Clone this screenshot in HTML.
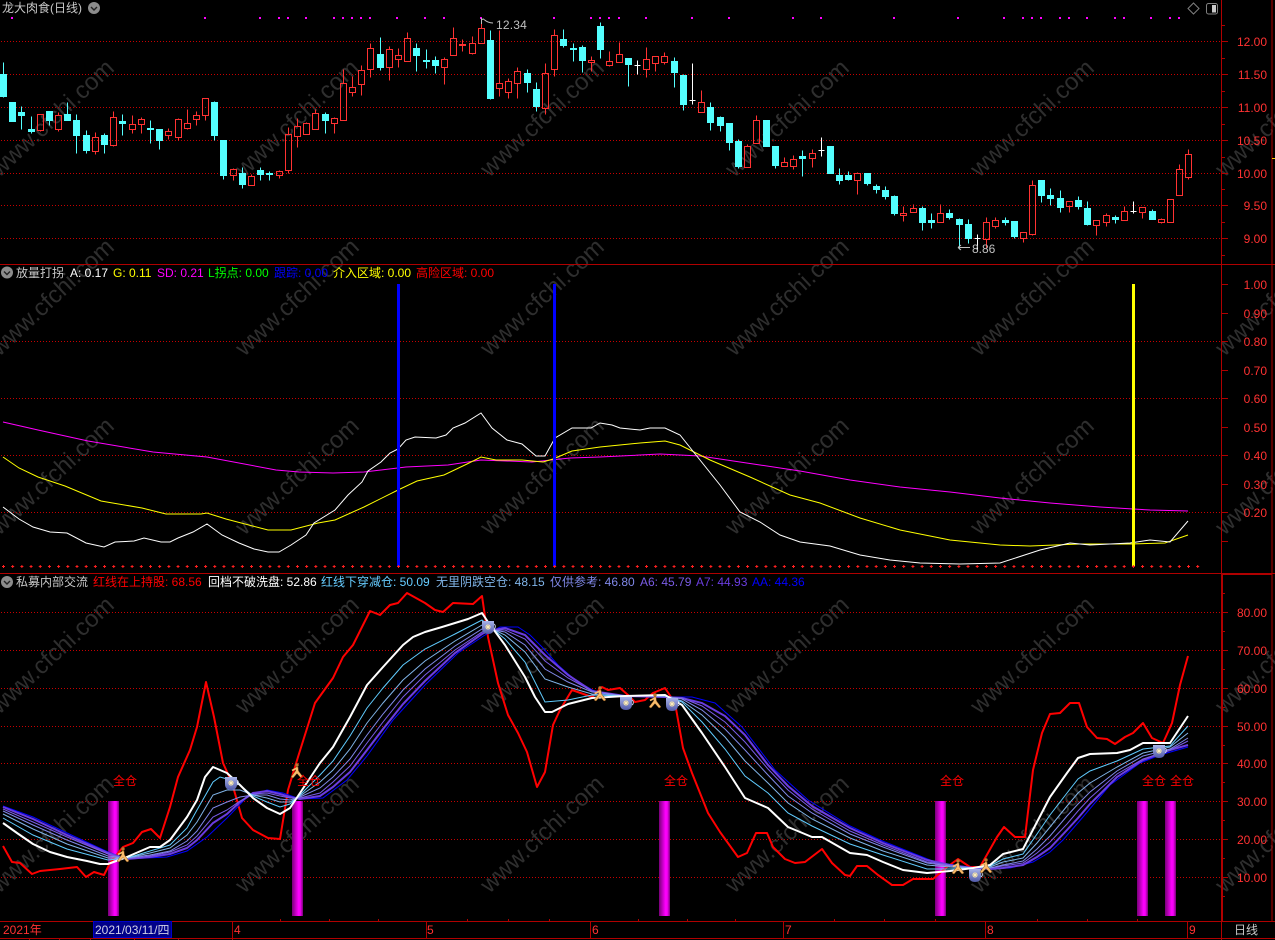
<!DOCTYPE html>
<html lang="zh-CN">
<head>
<meta charset="utf-8">
<title>龙大肉食(日线)</title>
<style>
html,body{margin:0;padding:0;background:#000;width:1275px;height:940px;overflow:hidden}
svg{display:block;position:absolute;left:0;top:0}
text{font-family:"Liberation Sans","Noto Sans CJK SC","WenQuanYi Zen Hei",sans-serif;font-size:12px;white-space:pre}
.wm text{font-size:24px;fill:#2e2e2e;text-anchor:middle}
.ax text{fill:#ff3232;text-anchor:end}
</style>
</head>
<body>
<svg width="1275" height="940" viewBox="0 0 1275 940" xmlns="http://www.w3.org/2000/svg">
<defs>
<linearGradient id="bar" x1="0" x2="1" y1="0" y2="0"><stop offset="0" stop-color="#780078"/><stop offset=".6" stop-color="#ff00ff"/><stop offset=".75" stop-color="#f400f4"/><stop offset="1" stop-color="#780078"/></linearGradient>
<linearGradient id="cupg" x1="0" x2="0" y1="0" y2="1"><stop offset="0" stop-color="#a8b4ea"/><stop offset="1" stop-color="#5058a8"/></linearGradient>
<g id="cup">
<path d="M6 -3a3 3 0 0 1 0 5" fill="none" stroke="#c8d0e8" stroke-width="1"/>
<path d="M-6 -6H6V1Q6 7 0 7Q-6 7-6 1Z" fill="url(#cupg)"/>
<path d="M0 -3V3M-3 0H3M-2-2L2 2M2-2L-2 2" stroke="#f4e4a8" stroke-width=".9"/>
<circle r="1" fill="#fff0c0"/>
</g>
<g id="run">
<circle cx="0" cy="-6" r="1.7" fill="#b87830"/>
<path d="M-1 -4L1 -4L1.5 0L6 6L4 7L0 2.5L-4 7L-6 6L-1.5 0Z" fill="#f8bc6c" stroke="#8a5014" stroke-width=".5"/>
<path d="M0 -3L-5 -.5" stroke="#f8bc6c" stroke-width="1.8"/>
</g>
</defs>

<!-- watermark -->
<g class="wm">
<text x="52" y="126" transform="rotate(-43 52 118)">www.cfchi.com</text><text x="297" y="126" transform="rotate(-43 297 118)">www.cfchi.com</text><text x="542" y="126" transform="rotate(-43 542 118)">www.cfchi.com</text><text x="787" y="126" transform="rotate(-43 787 118)">www.cfchi.com</text><text x="1032" y="126" transform="rotate(-43 1032 118)">www.cfchi.com</text><text x="1277" y="126" transform="rotate(-43 1277 118)">www.cfchi.com</text>
<text x="52" y="305" transform="rotate(-43 52 297)">www.cfchi.com</text><text x="297" y="305" transform="rotate(-43 297 297)">www.cfchi.com</text><text x="542" y="305" transform="rotate(-43 542 297)">www.cfchi.com</text><text x="787" y="305" transform="rotate(-43 787 297)">www.cfchi.com</text><text x="1032" y="305" transform="rotate(-43 1032 297)">www.cfchi.com</text><text x="1277" y="305" transform="rotate(-43 1277 297)">www.cfchi.com</text>
<text x="52" y="484" transform="rotate(-43 52 476)">www.cfchi.com</text><text x="297" y="484" transform="rotate(-43 297 476)">www.cfchi.com</text><text x="542" y="484" transform="rotate(-43 542 476)">www.cfchi.com</text><text x="787" y="484" transform="rotate(-43 787 476)">www.cfchi.com</text><text x="1032" y="484" transform="rotate(-43 1032 476)">www.cfchi.com</text><text x="1277" y="484" transform="rotate(-43 1277 476)">www.cfchi.com</text>
<text x="52" y="663" transform="rotate(-43 52 655)">www.cfchi.com</text><text x="297" y="663" transform="rotate(-43 297 655)">www.cfchi.com</text><text x="542" y="663" transform="rotate(-43 542 655)">www.cfchi.com</text><text x="787" y="663" transform="rotate(-43 787 655)">www.cfchi.com</text><text x="1032" y="663" transform="rotate(-43 1032 655)">www.cfchi.com</text><text x="1277" y="663" transform="rotate(-43 1277 655)">www.cfchi.com</text>
<text x="52" y="842" transform="rotate(-43 52 834)">www.cfchi.com</text><text x="297" y="842" transform="rotate(-43 297 834)">www.cfchi.com</text><text x="542" y="842" transform="rotate(-43 542 834)">www.cfchi.com</text><text x="787" y="842" transform="rotate(-43 787 834)">www.cfchi.com</text><text x="1032" y="842" transform="rotate(-43 1032 834)">www.cfchi.com</text><text x="1277" y="842" transform="rotate(-43 1277 834)">www.cfchi.com</text>
</g>

<!-- dotted grids -->
<path fill="none" stroke="#c80000" stroke-width="1" stroke-dasharray="1 2" d="M1 41.5H1222M1 74.5H1222M1 107.5H1222M1 140.5H1222M1 173.5H1222M1 205.5H1222M1 238.5H1222M1 341.5H1222M1 398.5H1222M1 455.5H1222M1 512.5H1222M1 612.5H1222M1 650.5H1222M1 688.5H1222M1 726.5H1222M1 763.5H1222M1 801.5H1222M1 839.5H1222M1 877.5H1222"/>

<!-- frames -->
<path fill="none" stroke="#b00000" stroke-width="1" d="M0 264.5H1275M0 573.5H1275M1222 574.5H1272M1221.5 0V940M1222.5 574V921M1272 0V921M0 921.5H1275M0 938.5H1275"/>
<!-- axis ticks -->
<path fill="none" stroke="#b00000" stroke-width="1" d="M1222 41.5h6M1222 74.5h6M1222 107.5h6M1222 140.5h6M1222 173.5h6M1222 205.5h6M1222 238.5h6M1222 25.5h3M1222 58.5h3M1222 91.5h3M1222 124.5h3M1222 157.5h3M1222 189.5h3M1222 222.5h3M1222 255.5h3M1222 284.5h6M1222 313.5h6M1222 341.5h6M1222 370.5h6M1222 398.5h6M1222 427.5h6M1222 455.5h6M1222 484.5h6M1222 512.5h6M1222 541.5h6M1222 612.5h6M1222 650.5h6M1222 688.5h6M1222 726.5h6M1222 763.5h6M1222 801.5h6M1222 839.5h6M1222 877.5h6M1222 593.5h3M1222 631.5h3M1222 669.5h3M1222 707.5h3M1222 745.5h3M1222 782.5h3M1222 820.5h3M1222 858.5h3M1222 896.5h3"/>
<path stroke="#ffd000" stroke-width="1" d="M1272 158.5h3"/>

<!-- magenta top dots -->
<path stroke="#ff00ff" stroke-width="2" fill="none" d="M11 18h2M204 18h2M259 18h2M278 18h2M287 18h2M305 18h2M333 18h2M342 18h2M351 18h2M360 18h2M369 18h2M396 18h2M424 18h2M443 18h2M480 18h2M553 18h2M590 18h2M599 18h2M608 18h2M618 18h2M645 18h2M691 18h2M728 18h2M792 18h2M820 18h2M893 18h2M957 18h2M1003 18h2M1022 18h2M1031 18h2M1040 18h2M1059 18h2M1068 18h2M1086 18h2M1114 18h2M1123 18h2M1150 18h2M1169 18h2M1178 18h2"/>

<!-- candles -->
<g transform="translate(.5,.5)">
<path fill="#54ffff" stroke="#54ffff" stroke-width="1" d="M3 62V97M0 74h6v22h-6zM12 102V121M9 102h6v19h-6zM21 106V129M18 112h6v3h-6zM31 116V133M28 129h6v2h-6zM49 111V125M46 111h6v9h-6zM67 102V120M64 114h6v6h-6zM76 114V153M73 120h6v15h-6zM86 130V153M83 135h6v15h-6zM104 133V153M101 135h6v9h-6zM122 114V135M119 121h6v2h-6zM150 120V143M147 128h6v1h-6zM159 129V149M156 129h6v11h-6zM214 101V140M211 102h6v33h-6zM223 140V179M220 140h6v35h-6zM242 167V188M239 173h6v11h-6zM260 167V180M257 170h6v4h-6zM269 171V180M266 173h6v1h-6zM325 112V133M322 114h6v6h-6zM380 37V70M377 54h6v13h-6zM416 43V71M413 48h6v7h-6zM426 49V68M423 60h6v1h-6zM435 56V73M432 60h6v5h-6zM490 30V99M487 40h6v58h-6zM527 69V92M524 73h6v9h-6zM536 82V111M533 89h6v17h-6zM563 29V47M560 39h6v6h-6zM573 43V61M570 48h6v1h-6zM582 45V72M579 47h6v13h-6zM600 22V58M597 26h6v23h-6zM628 58V86M625 58h6v6h-6zM674 57V87M671 61h6v11h-6zM683 74V110M680 75h6v29h-6zM710 102V130M707 107h6v15h-6zM720 116V131M717 117h6v8h-6zM729 123V150M726 123h6v19h-6zM738 139V168M735 141h6v25h-6zM766 120V146M763 120h6v26h-6zM775 146V168M772 146h6v19h-6zM802 150V176M799 156h6v2h-6zM830 146V173M827 146h6v27h-6zM839 168V184M836 175h6v5h-6zM848 171V180M845 175h6v4h-6zM867 173V185M864 173h6v10h-6zM876 184V193M873 186h6v3h-6zM885 186V199M882 190h6v6h-6zM894 195V215M891 196h6v17h-6zM922 206V230M919 208h6v14h-6zM931 213V228M928 220h6v2h-6zM949 209V219M946 213h6v4h-6zM959 218V249M956 219h6v5h-6zM968 219V243M965 224h6v14h-6zM1005 217V225M1002 220h6v2h-6zM1014 221V238M1011 221h6v15h-6zM1041 180V202M1038 180h6v15h-6zM1050 188V205M1047 195h6v3h-6zM1060 190V212M1057 198h6v9h-6zM1078 196V209M1075 200h6v6h-6zM1087 201V225M1084 208h6v16h-6zM1115 215V223M1112 217h6v2h-6zM1152 209V219M1149 211h6v8h-6z"/>
<path fill="none" stroke="#ff3232" stroke-width="1" d="M40 114m-3 0h6v16h-6zm3 16V131M58 112V115m-3 0h6v14h-6zm3 14V131M95 132V137m-3 0h6v14h-6zm3 14V154M113 111V117m-3 0h6v28h-6zm3 28V146M132 115V124m-3 0h6v5h-6zm3 5V133M141 117V119m-3 0h6v5h-6zm3 5V133M168 128V131m-3 0h6v4h-6zm3 4V139M178 118V119m-3 0h6v18h-6zm3 18V140M187 109V123m-3 0h6v5h-6zm3 5V129M196 111V115m-3 0h6v4h-6zm3 4V125M205 98m-3 0h6v17h-6zm3 17V120M233 168V169m-3 0h6v6h-6zm3 6V180M251 174V176m-3 0h6v9h-6zM279 170V171m-3 0h6v4h-6zm3 4V178M288 127V134m-3 0h6v36h-6zm3 36V173M297 118V126m-3 0h6v10h-6zm3 10V147M306 122V123m-3 0h6v11h-6zM315 109V113m-3 0h6v16h-6zM334 117V118m-3 0h6v5h-6zm3 5V133M343 69V83m-3 0h6v37h-6zM352 76V87m-3 0h6v5h-6zm3 5V96M361 65V70m-3 0h6v14h-6zm3 14V95M370 43V48m-3 0h6v21h-6zm3 21V77M389 46V49m-3 0h6v18h-6zm3 18V80M398 48V55m-3 0h6v4h-6zm3 4V67M407 32V38m-3 0h6v23h-6zM444 57V59m-3 0h6v8h-6zm3 8V84M453 27V38m-3 0h6v17h-6zM462 39V44m-3 0h6v1h-6zm3 1V51M472 36V43m-3 0h6v10h-6zm3 10V54M481 18V28m-3 0h6v15h-6zM499 30V83m-3 0h6v5h-6zm3 5V96M508 78V81m-3 0h6v11h-6zm3 11V98M517 67V71m-3 0h6v12h-6zm3 12V98M545 63V73m-3 0h6v35h-6zm3 35V114M554 29V35m-3 0h6v34h-6zm3 34V76M591 56V60m-3 0h6v2h-6zm3 2V71M609 51V61m-3 0h6v4h-6zm3 4V66M619 42V54m-3 0h6v8h-6zM646 47V59m-3 0h6v10h-6zm3 10V77M655 56m-3 0h6v7h-6zm3 7V71M664 52V56m-3 0h6v6h-6zm3 6V64M701 90V102m-3 0h6v10h-6zM747 144V146m-3 0h6v21h-6zM756 115V120m-3 0h6v23h-6zM784 157V162m-3 0h6v4h-6zM793 155V159m-3 0h6v7h-6zm3 7V169M812 149V153m-3 0h6v5h-6zm3 5V167M857 172V173m-3 0h6v7h-6zm3 7V194M903 206V213m-3 0h6v2h-6zm3 2V221M913 204V208m-3 0h6v4h-6zM940 204V213m-3 0h6v9h-6zM986 217V222m-3 0h6v17h-6zm3 17V248M995 217V220m-3 0h6v6h-6zm3 6V228M1023 232m-3 0h6v6h-6zm3 6V242M1032 180V185m-3 0h6v49h-6zm3 49V235M1069 201m-3 0h6v5h-6zm3 5V212M1096 220m-3 0h6v5h-6zm3 5V235M1106 213V215m-3 0h6v7h-6zm3 7V226M1124 206V211m-3 0h6v9h-6zM1142 207m-3 0h6v5h-6zm3 5V218M1161 218V219m-3 0h6v3h-6zm3 3V223M1170 199m-3 0h6v23h-6zM1179 164V169m-3 0h6v26h-6zM1188 149V154m-3 0h6v23h-6zm3 23V179"/>
<path fill="none" stroke="#ffffff" stroke-width="1" d="M637 60V74M634 65h6M692 63V104M689 100h6M821 137V156M818 150h6M977 234V249M974 238h6M1133 201V213M1130 211h6"/>
</g>

<!-- hi / lo markers -->
<path fill="none" stroke="#c0c0c0" stroke-width="1" d="M481.5 18V24M481.5 19.5L484 19M484 19.5Q488 23 493 23"/>
<text x="496" y="29" fill="#c0c0c0" letter-spacing=".2">12.34</text>
<path fill="none" stroke="#c0c0c0" stroke-width="1" d="M958 247.5H970M958 247.5L961 245M958 247.5L961 250"/>
<text x="972" y="253" fill="#c0c0c0">8.86</text>

<!-- Panel 2 lines -->
<polyline fill="none" stroke="#ff00ff" stroke-width="1" points="3,422 38,430 88,441 153,452 207,457 276,470 299,472 333,473 364,472 406,467 448,465 481,460 532,462 570,458 600,457 660,454 700,456 760,465 800,471 850,480 900,487 950,492 1000,498 1050,503 1100,507 1150,510 1188,511"/>
<polyline fill="none" stroke="#ffff00" stroke-width="1" points="3,457 19,468 38,477 65,486 101,501 142,508 166,514 201,514 207,513 226,519 268,530 291,530 318,523 335,520 364,507 398,490 417,481 444,475 467,464 481,457 496,460 522,460 543,462 553,459 572,451 600,447 640,443 665,441 680,445 710,460 750,477 790,495 820,503 860,518 900,530 950,540 1000,545 1030,546 1080,544 1130,544 1165,543 1188,535"/>
<polyline fill="none" stroke="#ffffff" stroke-width="1" points="3,507 19,519 33,527 50,532 67,533 86,543 104,547 115,542 134,541 144,538 161,542 170,542 178,538 193,532 207,524 222,535 239,543 254,549 268,552 279,552 291,545 306,535 314,523 335,510 348,495 362,482 368,471 381,462 390,453 398,449 406,440 415,437 436,438 446,435 453,428 465,423 481,413 492,428 507,440 522,444 536,456 545,456 555,438 572,428 591,428 600,423 612,425 620,428 640,430 650,428 665,428 680,435 700,460 720,485 740,512 760,522 780,535 800,542 830,546 860,555 890,560 920,563 960,564 1000,563 1040,550 1070,543 1090,545 1110,544 1130,543 1150,540 1170,542 1188,521"/>
<rect x="397" y="284" width="3" height="282" fill="#0000ff"/>
<rect x="553" y="284" width="3" height="282" fill="#0000ff"/>
<rect x="1132" y="284" width="3" height="282" fill="#ffff00"/>
<path fill="none" stroke="#ff2020" stroke-width="1" stroke-dasharray="3 6.186" d="M2 566.5H1200"/>
<path fill="none" stroke="#ff2020" stroke-width="3" stroke-dasharray="1 8.186" d="M3 566.5H1200"/>

<!-- Panel 3 bars -->
<rect x="108" y="801" width="11" height="115" fill="url(#bar)"/>
<rect x="292" y="801" width="11" height="115" fill="url(#bar)"/>
<rect x="659" y="801" width="11" height="115" fill="url(#bar)"/>
<rect x="935" y="801" width="11" height="115" fill="url(#bar)"/>
<rect x="1137" y="801" width="11" height="115" fill="url(#bar)"/>
<rect x="1165" y="801" width="11" height="115" fill="url(#bar)"/>

<!-- Panel 3 lines -->
<polyline fill="none" stroke="#ff0000" stroke-width="2" stroke-linejoin="round" points="3,846 12,862 20,863 32,874 40,871 60,869 77,867 86,877 94,872 104,875 110,863 123,847 133,843 142,832 151,829 160,838 170,807 178,777 190,750 197,727 206,682 214,717 223,763 232,783 242,818 253,830 268,838 280,839 288,790 298,757 315,703 333,678 343,657 353,645 370,611 380,615 390,605 398,603 407,593 425,603 435,610 443,612 453,603 473,604 482,596 488,637 498,683 508,715 518,733 527,752 537,787 545,772 553,725 560,710 572,690 592,697 602,687 608,690 620,688 628,695 635,702 645,700 653,693 665,688 675,703 683,748 692,773 708,813 720,832 738,857 747,853 756,833 767,833 773,847 785,859 795,863 805,862 822,849 832,863 845,875 850,876 857,866 867,866 878,875 892,885 903,885 913,879 933,879 947,867 958,859 970,867 980,867 997,837 1004,827 1015,837 1025,837 1033,770 1042,733 1050,714 1060,713 1070,703 1079,703 1087,727 1097,738 1107,739 1115,744 1125,737 1133,733 1143,723 1152,738 1163,743 1172,723 1180,685 1188,656"/>
<polyline fill="none" stroke="#0000ff" stroke-width="1" points="3,806 33,817 67,833 108,852 127,859 167,857 187,851 207,837 227,818 247,797 267,790 283,793 300,799 323,798 347,780 367,756 393,720 425,685 458,653 485,635 500,627 518,627 530,635 542,647 558,665 575,680 598,693 625,696 660,697 692,697 715,703 742,727 775,770 808,800 850,826 880,840 910,852 935,862 960,866 985,869 1010,868 1033,862 1050,852 1063,840 1083,817 1110,785 1140,763 1160,755 1188,747"/>
<polyline fill="none" stroke="#6a3ce0" stroke-width="2" points="3,807 33,819 67,835 108,853 127,859 150,857 170,854 187,848 197,840 213,823 227,814 240,802 253,793 267,791 280,794 290,797 300,799 320,796 333,787 350,772 367,750 383,729 403,704 425,681 455,653 482,634 488,631 505,628 525,635 545,655 568,675 592,691 625,696 665,697 682,698 702,703 725,716 745,735 768,765 788,786 812,806 850,828 883,843 927,860 950,865 973,868 990,869 1003,868 1023,865 1037,857 1050,848 1067,830 1078,818 1090,804 1117,777 1143,760 1170,750 1188,745"/>
<polyline fill="none" stroke="#7a5ce6" stroke-width="1" points="3,809 33,822 67,837 108,854 127,859 150,856 170,852 187,845 197,836 213,817 227,810 240,801 253,794 267,793 280,796 290,798 300,798 320,793 333,782 350,766 367,743 383,722 403,697 425,675 455,650 482,632 488,630 505,630 525,639 545,661 568,678 592,691 625,696 665,697 682,698 702,706 725,722 745,742 768,769 788,790 812,809 850,831 883,845 927,862 950,865 973,868 990,868 1003,866 1023,863 1037,853 1050,842 1067,824 1078,811 1090,798 1117,774 1143,759 1170,750 1188,741"/>
<polyline fill="none" stroke="#8088e8" stroke-width="1" points="3,811 33,825 67,840 108,856 127,858 150,855 170,851 187,841 197,831 213,808 227,802 240,797 253,795 267,795 280,799 290,800 300,797 320,788 333,777 350,759 367,735 383,714 403,690 425,669 455,646 482,629 488,629 505,632 525,645 545,669 568,682 592,692 625,696 665,696 682,699 702,710 725,729 745,750 768,775 788,796 812,813 850,834 883,847 927,863 950,866 973,868 990,868 1003,865 1023,861 1037,849 1050,836 1067,816 1078,804 1090,792 1117,771 1143,756 1170,749 1188,738"/>
<polyline fill="none" stroke="#80b4e8" stroke-width="1" points="3,814 33,829 67,844 108,858 127,858 150,853 170,848 187,835 197,822 213,795 227,790 240,790 253,795 267,798 280,802 290,802 300,796 320,782 333,770 350,749 367,723 383,703 403,680 425,661 455,641 482,625 488,627 505,635 525,652 545,679 568,687 592,694 625,696 665,696 682,701 702,715 725,737 745,761 768,783 788,803 812,819 850,838 883,851 927,865 950,867 973,868 990,867 1003,862 1023,858 1037,843 1050,827 1067,806 1078,793 1090,783 1117,767 1143,753 1170,747 1188,733"/>
<polyline fill="none" stroke="#60ccff" stroke-width="1" points="3,818 33,835 67,849 108,860 127,858 150,851 170,845 187,828 197,810 213,782 220,777 227,779 240,785 253,796 267,802 280,807 290,804 300,795 320,775 333,761 350,736 367,708 383,688 403,665 425,649 455,634 482,620 488,625 505,639 525,662 545,702 568,700 592,695 625,696 665,696 682,702 702,722 725,749 745,776 768,793 788,813 812,826 850,844 883,855 927,869 950,869 973,868 990,866 1003,859 1023,854 1037,834 1050,815 1067,793 1078,779 1090,771 1117,761 1143,749 1170,746 1188,726"/>
<polyline fill="none" stroke="#ffffff" stroke-width="2" stroke-linejoin="round" points="3,823 17,833 33,844 50,852 67,857 87,861 100,864 108,864 127,857 150,847 160,847 170,840 187,817 197,800 205,777 213,767 227,773 240,785 253,798 267,808 280,814 290,808 300,793 320,763 333,747 350,717 367,685 383,667 403,645 413,637 425,632 442,627 455,623 468,619 482,613 488,622 505,645 525,677 535,697 545,712 552,712 568,704 592,698 625,696 665,695 682,705 702,733 725,767 745,798 768,808 788,827 812,837 822,837 850,853 867,855 883,862 903,870 927,873 950,871 973,868 990,865 1003,854 1023,849 1037,822 1050,797 1067,773 1078,758 1090,754 1117,753 1130,750 1143,743 1170,743 1188,716"/>

<!-- icons -->
<use href="#cup" x="231" y="783"/><use href="#cup" x="488" y="627"/><use href="#cup" x="626" y="703"/><use href="#cup" x="672" y="704"/><use href="#cup" x="975" y="875"/><use href="#cup" x="1159" y="751"/>
<use href="#run" x="123" y="855"/><use href="#run" x="297" y="771"/><use href="#run" x="600" y="694"/><use href="#run" x="655" y="701"/><use href="#run" x="958" y="867"/><use href="#run" x="986" y="866"/>

<!-- full position labels -->
<g fill="#ff0000">
<text x="113" y="785">全仓</text><text x="297" y="785">全仓</text><text x="664" y="785">全仓</text><text x="940" y="785">全仓</text><text x="1142" y="785">全仓</text><text x="1170" y="785">全仓</text>
</g>

<!-- axis labels -->
<g class="ax">
<text x="1267" y="46">12.00</text><text x="1267" y="79">11.50</text><text x="1267" y="112">11.00</text><text x="1267" y="145">10.50</text><text x="1267" y="178">10.00</text><text x="1267" y="210">9.50</text><text x="1267" y="243">9.00</text>
<text x="1267" y="289">1.00</text><text x="1267" y="318">0.90</text><text x="1267" y="346">0.80</text><text x="1267" y="375">0.70</text><text x="1267" y="403">0.60</text><text x="1267" y="432">0.50</text><text x="1267" y="460">0.40</text><text x="1267" y="489">0.30</text><text x="1267" y="517">0.20</text>
<text x="1267" y="617">80.00</text><text x="1267" y="655">70.00</text><text x="1267" y="693">60.00</text><text x="1267" y="731">50.00</text><text x="1267" y="768">40.00</text><text x="1267" y="806">30.00</text><text x="1267" y="844">20.00</text><text x="1267" y="882">10.00</text>
</g>

<!-- header 1 -->
<text x="2" y="12" fill="#c8c8c8">龙大肉食(日线)</text>
<circle cx="94" cy="8" r="6" fill="#8c8c8c"/><path d="M91 7L94 10L97 7" fill="none" stroke="#222" stroke-width="1.4"/>
<path d="M1193.5 3L1199 8.5L1193.5 14L1188 8.5Z" fill="none" stroke="#808080"/>
<rect x="1206.5" y="3.5" width="11" height="10.5" rx="2" fill="none" stroke="#808080"/>
<rect x="1212" y="5" width="4" height="7.5" fill="#c8c8c8"/>

<!-- header 2 -->
<circle cx="7" cy="272.5" r="6" fill="#8c8c8c"/><path d="M4 271.5L7 274.5L10 271.5" fill="none" stroke="#222" stroke-width="1.4"/>
<text x="16" y="277" fill="#c8c8c8">放量打拐</text>
<text x="70" y="277" fill="#ffffff">A: 0.17</text>
<text x="113" y="277" fill="#ffff00">G: 0.11</text>
<text x="157" y="277" fill="#ff00ff">SD: 0.21</text>
<text x="208" y="277" fill="#00ff00">L拐点: 0.00</text>
<text x="274" y="277" fill="#0000ff">跟踪: 0.00</text>
<text x="333" y="277" fill="#ffff00">介入区域: 0.00</text>
<text x="416" y="277" fill="#ff0000">高险区域: 0.00</text>

<!-- header 3 -->
<circle cx="7" cy="582" r="6" fill="#8c8c8c"/><path d="M4 581L7 584L10 581" fill="none" stroke="#222" stroke-width="1.4"/>
<text x="16" y="586" fill="#c8c8c8">私募内部交流</text>
<text x="93" y="586" fill="#ff0000">红线在上持股: 68.56</text>
<text x="208" y="586" fill="#ffffff">回档不破洗盘: 52.86</text>
<text x="321" y="586" fill="#66ccff">红线下穿减仓: 50.09</text>
<text x="436" y="586" fill="#80b4e8">无里阴跌空仓: 48.15</text>
<text x="550" y="586" fill="#8088e8">仅供参考: 46.80</text>
<text x="640" y="586" fill="#7a5ce6">A6: 45.79</text>
<text x="696" y="586" fill="#6a3ce0">A7: 44.93</text>
<text x="752" y="586" fill="#0000ff">AA: 44.36</text>

<!-- time axis -->
<rect x="93.5" y="921.5" width="78" height="16" fill="#000088" stroke="#0000c8"/>
<path fill="none" stroke="#b00000" d="M232.5 921V938M426.5 921V938M590.5 921V938M783.5 921V938M985.5 921V938M1187.5 921V938M29.5 938V940M59.5 938V940M90.5 938V940M134.5 938V940M178.5 938V940M232.5 938V940M280.5 919V921M329.5 919V921M378.5 919V921M467.5 919V921M508.5 919V921M549.5 919V921M638.5 919V921M687.5 919V921M735.5 919V921M834.5 919V921M884.5 919V921M935.5 919V921M1037.5 919V921M1087.5 919V921M1137.5 919V921"/>
<text x="3" y="934" fill="#ff3232">2021年</text>
<text x="95" y="934" fill="#d0d0e8">2021/03/11/四</text>
<text x="234" y="934" fill="#ff3232">4</text>
<text x="427" y="934" fill="#ff3232">5</text>
<text x="592" y="934" fill="#ff3232">6</text>
<text x="785" y="934" fill="#ff3232">7</text>
<text x="987" y="934" fill="#ff3232">8</text>
<text x="1189" y="934" fill="#ff3232">9</text>
<text x="1234" y="934" fill="#c8c8c8">日线</text>
</svg>
</body>
</html>
